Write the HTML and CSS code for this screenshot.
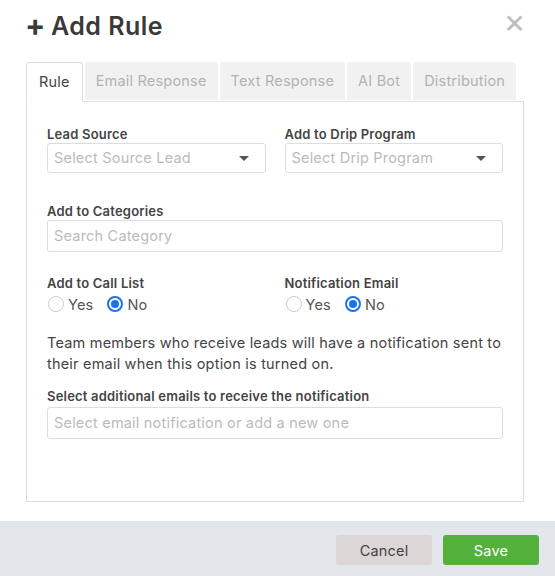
FILE: index.html
```html
<!DOCTYPE html>
<html lang="en">
<head>
    <meta charset="UTF-8">
    <meta name="viewport" content="width=device-width, initial-scale=1.0">
    <title>Add Rule</title>
    <link rel="stylesheet" href="styles.css">
</head>
<body>
    <div class="modal">
        <div class="modal-header">
            <h2><span class="plus">+</span>Add Rule</h2>
            <span class="close">&times;</span>
        </div>

        <div class="modal-body">
            <ul class="tabs">
                <li class="active">Rule</li>
                <li>Email Response</li>
                <li>Text Response</li>
                <li>AI Bot</li>
                <li>Distribution</li>
            </ul>

            <div class="panel">
                <div class="row">
                    <div class="field">
                        <label>Lead Source</label>
                        <div class="select">Select Source Lead<span class="caret"></span></div>
                    </div>
                    <div class="field">
                        <label>Add to Drip Program</label>
                        <div class="select">Select Drip Program<span class="caret"></span></div>
                    </div>
                </div>

                <div class="field wide">
                    <label>Add to Categories</label>
                    <div class="input">Search Category</div>
                </div>

                <div class="row radios-row">
                    <div class="field">
                        <label>Add to Call List</label>
                        <div class="radios">
                            <span class="radio"></span>Yes
                            <span class="radio checked"></span>No
                        </div>
                    </div>
                    <div class="field">
                        <label>Notification Email</label>
                        <div class="radios">
                            <span class="radio"></span>Yes
                            <span class="radio checked"></span>No
                        </div>
                    </div>
                </div>

                <p class="note">Team members who receive leads will have a notification sent to their email when this option is turned on.</p>

                <div class="field extra">
                    <label>Select additional emails to receive the notification</label>
                    <div class="input">Select email notification or add a new one</div>
                </div>
            </div>
        </div>

        <div class="modal-footer">
            <button class="btn-cancel">Cancel</button>
            <button class="btn-save">Save</button>
        </div>
    </div>
</body>
</html>
```

FILE: styles.css
```css
body {
    font-family: Inter, "Open Sans", sans-serif;
    margin: 0;
    padding: 0;
    background-color: #fff;
    color: #444;
    letter-spacing: 0.2px;
}
.modal {
    width: 555px;
    height: 576px;
    display: flex;
    flex-direction: column;
}
.modal-header {
    display: flex;
    justify-content: space-between;
    align-items: center;
    padding: 7px 29px 0 25px;
    height: 34px;
}
.modal-header h2 {
    margin: 0;
    font-size: 25px;
    font-weight: 600;
    color: #3a3a3a;
    letter-spacing: 0.5px;
}
.plus {
    font-weight: 700;
    font-size: 30px;
    margin-right: 5px;
    position: relative;
    top: 1px;
}
.close {
    font-size: 34px;
    color: #bdbdbd;
    font-weight: 400;
    line-height: 1;
    position: relative;
    top: -3px;
}
.modal-body {
    padding: 21px 31px 0 26px;
}
.tabs {
    list-style: none;
    margin: 0;
    padding: 0;
    display: flex;
    gap: 2px;
    position: relative;
    z-index: 1;
}
.tabs li {
    height: 38px;
    line-height: 38px;
    padding: 0 11px;
    font-size: 14.5px;
    color: #b3b3b3;
    background-color: #f1f1f1;
    border-radius: 3px 3px 0 0;
}
.tabs li.active {
    background-color: #fff;
    color: #444;
    border: 1px solid #ddd;
    border-bottom-color: #fff;
    height: 38px;
    padding: 0 12px;
}
.panel {
    border: 1px solid #ddd;
    margin-top: -1px;
    height: 375px;
    padding: 24px 20px 0 20px;
}
.row {
    display: flex;
    gap: 19px;
}
.row .field {
    flex: 1;
}
label {
    display: block;
    font-size: 13px;
    font-weight: 600;
    color: #444;
    line-height: 17px;
    margin-bottom: 0;
}
.extra label {
    margin-bottom: 2px;
}
.select, .input {
    box-sizing: border-box;
    border: 1px solid #ddd;
    border-radius: 3px;
    color: #bbb;
    font-size: 14.5px;
    padding: 0 6px;
    position: relative;
}
.select {
    height: 30px;
    line-height: 28px;
}
.input {
    height: 32px;
    line-height: 30px;
}
.caret {
    position: absolute;
    right: 16px;
    top: 12px;
    width: 0;
    height: 0;
    border-left: 5px solid transparent;
    border-right: 5px solid transparent;
    border-top: 5px solid #555;
}
.wide {
    margin-top: 30px;
}
.radios-row {
    margin-top: 23px;
}
.radios {
    display: flex;
    align-items: center;
    font-size: 14.5px;
    color: #555;
    height: 22px;
    margin-top: 1px;
}
.radio {
    box-sizing: border-box;
    width: 16px;
    height: 16px;
    border: 1px solid #ccc;
    border-radius: 50%;
    margin: 0 4px 0 1px;
}
.radio.checked {
    border: 2px solid #1a73e8;
    margin-left: 14px;
    position: relative;
}
.radio.checked::after {
    content: "";
    position: absolute;
    left: 2px;
    top: 2px;
    width: 8px;
    height: 8px;
    border-radius: 50%;
    background-color: #1a73e8;
}
.note {
    font-size: 14.5px;
    line-height: 21px;
    color: #444;
    margin: 17px 0 14px;
}
.modal-footer {
    margin-top: auto;
    box-sizing: border-box;
    height: 55px;
    background-color: #e3e6ea;
    display: flex;
    justify-content: flex-end;
    align-items: center;
    gap: 11px;
    padding: 3px 16px 0 0;
}
.modal-footer button {
    font-family: inherit;
    letter-spacing: inherit;
    height: 30px;
    width: 96px;
    border: none;
    border-radius: 3px;
    font-size: 14.5px;
    cursor: pointer;
}
.btn-cancel {
    background-color: #ddd6d6;
    color: #444;
}
.btn-save {
    background-color: #54b13b;
    color: #fff;
}
```
